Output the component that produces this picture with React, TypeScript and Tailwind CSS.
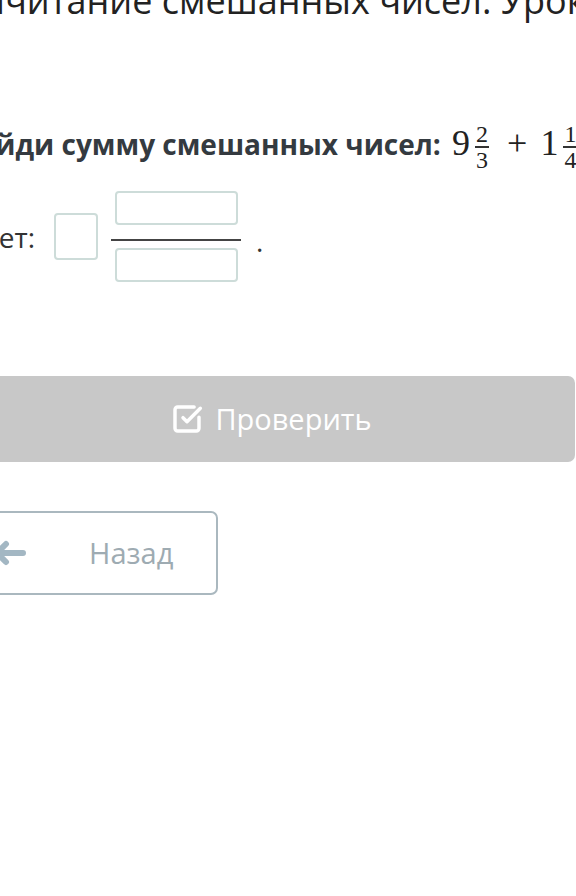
import { SquareCheckBig } from "lucide-react";

function Frac({ top, bottom }: { top: string; bottom: string }) {
  return (
    <span className="inline-flex flex-col items-center align-middle mx-[5px] text-[24px] leading-[24px]">
      <span className="px-[1px]">{top}</span>
      <span className="w-full h-[1.5px] bg-[#333]" />
      <span className="px-[1px]">{bottom}</span>
    </span>
  );
}

export default function App() {
  return (
    <div
      className="w-[576px] h-[896px] overflow-hidden bg-white"
      style={{ fontFamily: '"Open Sans", "Noto Sans", sans-serif' }}
    >
      <div className="w-[616px] -ml-[40px]">
        <h1 className="-mt-[21px] -ml-[6px] h-[44px] text-[36px] leading-[44px] text-[#222] whitespace-nowrap">
          Вычитание смешанных чисел. Урок 2
        </h1>

        <p className="mt-[99px] -ml-[3px] h-[38px] text-[28px] leading-[38px] font-bold text-[#343a40] whitespace-nowrap">
          Найди сумму смешанных чисел:{" "}
          <span
            className="font-normal text-[36px] text-[#222]"
            style={{ fontFamily: '"Liberation Serif", serif' }}
          >
            <span className="ml-[4px]">9</span>
            <Frac top="2" bottom="3" />
            <span className="mx-[13px]">+</span>1<Frac top="1" bottom="4" />
          </span>
        </p>

        <div className="mt-[31px] flex items-center text-[28px] leading-[34px] text-[#333]">
          <span className="-ml-[45px] w-[120px] shrink-0 text-right whitespace-nowrap">Ответ:</span>
          <div className="ml-[19px] w-[44px] h-[47px] rounded-[4px] border-2 border-[#cddcd9]" />
          <div className="ml-[13px] w-[130px] flex flex-col items-center">
            <div className="w-[123px] h-[34px] rounded-[4px] border-2 border-[#cddcd9]" />
            <div className="mt-[14px] w-full h-[2px] bg-[#444]" />
            <div className="mt-[7px] w-[123px] h-[34px] rounded-[4px] border-2 border-[#cddcd9]" />
          </div>
          <span className="ml-[15px] mt-[8px]">.</span>
        </div>

        <button className="mt-[94px] w-[615px] h-[86px] pl-[8px] rounded-[7px] bg-[#c8c8c8] flex items-center justify-center gap-[12px] text-white text-[29px]">
          <SquareCheckBig size={32} strokeWidth={2.6} />
          <span>Проверить</span>
        </button>

        <button className="mt-[49px] w-[258px] h-[84px] rounded-[7px] border-2 border-[#aab8bf] flex items-center text-[#9eabb2] text-[29px]">
          <svg width="34" height="26" viewBox="0 0 34 26" className="ml-[30px]">
            <path
              d="M31 13H5 M14 4 L5 13 L14 22"
              fill="none"
              stroke="#a3b7c3"
              strokeWidth="6"
              strokeLinecap="round"
              strokeLinejoin="round"
            />
          </svg>
          <span className="ml-[63px]">Назад</span>
        </button>
      </div>
    </div>
  );
}
